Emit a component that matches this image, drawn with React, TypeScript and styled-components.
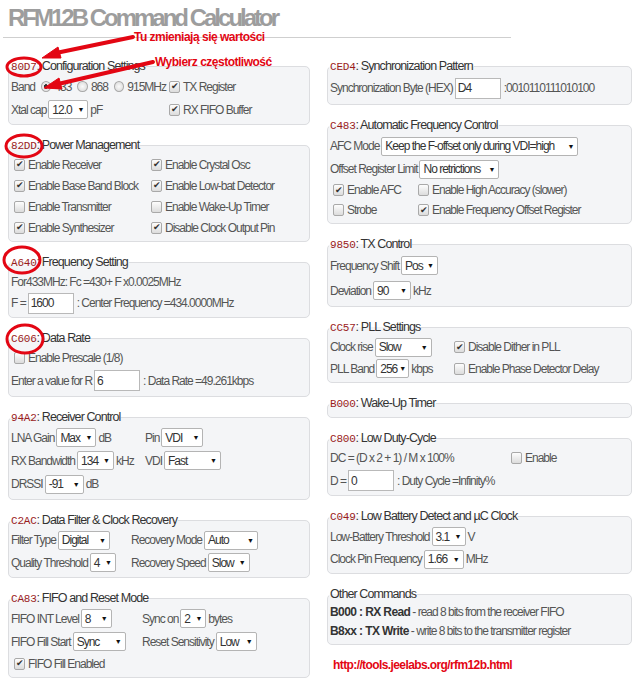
import * as React from "react";
import styled, { createGlobalStyle } from "styled-components";

const TEXT = "#555";
const DARK = "#333";
const CODE_RED = "#9b1c1c";
const MARK_RED = "#e30613";
const FONT = `"Liberation Sans", Arial, sans-serif`;

const GlobalStyle = createGlobalStyle`
  html, body {
    margin: 0;
    padding: 0;
    background: #fff;
  }
  body {
    font-family: ${FONT};
    font-size: 12px;
    letter-spacing: -1px;
    color: ${TEXT};
  }
`;

type CheckProps = { on?: boolean; label: string };

const Check: React.FC<CheckProps> = ({ on, label }) => (
  <CheckLabel>
    <CheckBox>{on ? "✔" : ""}</CheckBox>
    {label}
  </CheckLabel>
);

const Select: React.FC<{ value: string; w: number }> = ({ value, w }) => (
  <SelectBox $w={w}>
    <span>{value}</span>
    <Arrow>▼</Arrow>
  </SelectBox>
);

const Legend: React.FC<{ code?: string; title: string }> = ({ code, title }) => (
  <BoxLegend>
    {code && <Code>{code}</Code>}
    {code ? ": " : ""}
    {title}
  </BoxLegend>
);

const App: React.FC = () => {
  return (
    <Page>
      <GlobalStyle />
      <Title>RFM12B Command Calculator</Title>
      <Rule />
      <Columns>
        <Column>
          <Box>
            <Legend code="80D7" title="Configuration Settings" />
            <Pair $col={155}>
              <Row $h={23}>
                Band
                <Radio $on />433<Radio />868<Radio />915MHz
              </Row>
              <Row $h={23}>
                <Check on label="TX Register" />
              </Row>
              <Row $h={23}>
                Xtal cap <Select value="12.0" w={40} /> pF
              </Row>
              <Row $h={23}>
                <Check on label="RX FIFO Buffer" />
              </Row>
            </Pair>
          </Box>

          <Box>
            <Legend code="82DD" title="Power Management" />
            <Pair $col={137}>
              <Row $h={21}><Check on label="Enable Receiver" /></Row>
              <Row $h={21}><Check on label="Enable Crystal Osc" /></Row>
              <Row $h={21}><Check on label="Enable Base Band Block" /></Row>
              <Row $h={21}><Check on label="Enable Low-bat Detector" /></Row>
              <Row $h={21}><Check label="Enable Transmitter" /></Row>
              <Row $h={21}><Check label="Enable Wake-Up Timer" /></Row>
              <Row $h={21}><Check on label="Enable Synthesizer" /></Row>
              <Row $h={21}><Check on label="Disable Clock Output Pin" /></Row>
            </Pair>
          </Box>

          <Box>
            <Legend code="A640" title="Frequency Setting" />
            <Row $h={21}>For433MHz: Fc =430+ F x0.0025MHz</Row>
            <Row>
              F = <TextBox $w={46}>1600</TextBox>: Center Frequency =434.0000MHz
            </Row>
          </Box>

          <Box>
            <Legend code="C606" title="Data Rate" />
            <Row $h={21}><Check label="Enable Prescale (1/8)" /></Row>
            <Row $h={25}>
              Enter a value for R<TextBox $w={46}>6</TextBox>: Data Rate =49.261kbps
            </Row>
          </Box>

          <Box>
            <Legend code="94A2" title="Receiver Control" />
            <Pair $col={134}>
              <Row $h={23}>LNA Gain <Select value="Max" w={40} /> dB</Row>
              <Row $h={23}>Pin <Select value="VDI" w={42} /></Row>
              <Row $h={23}>RX Bandwidth <Select value="134" w={37} /> kHz</Row>
              <Row $h={23}>VDI <Select value="Fast" w={57} /></Row>
              <Row $h={24}>DRSSI <Select value="-91" w={39} /> dB</Row>
            </Pair>
          </Box>

          <Box>
            <Legend code="C2AC" title="Data Filter &amp; Clock Recovery" />
            <Pair $col={120}>
              <Row $h={22}>Filter Type <Select value="Digital" w={52} /></Row>
              <Row $h={22}>Recovery Mode <Select value="Auto" w={54} /></Row>
              <Row $h={23}>Quality Threshold <Select value="4" w={26} /></Row>
              <Row $h={23}>Recovery Speed <Select value="Slow" w={42} /></Row>
            </Pair>
          </Box>

          <Box>
            <Legend code="CA83" title="FIFO and Reset Mode" />
            <Pair $col={131}>
              <Row $h={23}>FIFO INT Level <Select value="8" w={31} /></Row>
              <Row $h={23}>Sync on <Select value="2" w={26} /> bytes</Row>
              <Row $h={23}>FIFO Fill Start <Select value="Sync" w={53} /></Row>
              <Row $h={23}>Reset Sensitivity <Select value="Low" w={41} /></Row>
            </Pair>
            <Row $h={21}><Check on label="FIFO Fill Enabled" /></Row>
          </Box>
        </Column>

        <Column>
          <Box>
            <Legend code="CED4" title="Synchronization Pattern" />
            <Row $h={26}>
              Synchronization Byte (HEX)<TextBox $w={46}>D4</TextBox>:0010110111010100
            </Row>
          </Box>

          <Box>
            <Legend code="C483" title="Automatic Frequency Control" />
            <Row $h={24}>AFC Mode <Select value="Keep the F-offset only during VDI=high" w={197} /></Row>
            <Row $h={22}>Offset Register Limit <Select value="No retrictions" w={80} /></Row>
            <Pair $col={85}>
              <Row $h={20}><Check on label="Enable AFC" /></Row>
              <Row $h={20}><Check label="Enable High Accuracy (slower)" /></Row>
              <Row $h={20}><Check label="Strobe" /></Row>
              <Row $h={20}><Check on label="Enable Frequency Offset Register" /></Row>
            </Pair>
          </Box>

          <Box>
            <Legend code="9850" title="TX Control" />
            <Row $h={25}>Frequency Shift <Select value="Pos" w={37} /></Row>
            <Row $h={25}>Deviation <Select value="90" w={38} /> kHz</Row>
          </Box>

          <Box>
            <Legend code="CC57" title="PLL Settings" />
            <Pair $col={121}>
              <Row $h={22}>Clock rise <Select value="Slow" w={57} /></Row>
              <Row $h={22}><Check on label="Disable Dither in PLL" /></Row>
              <Row $h={21}>PLL Band <Select value="256" w={33} /> kbps</Row>
              <Row $h={21}><Check label="Enable Phase Detector Delay" /></Row>
            </Pair>
          </Box>

          <Box $empty>
            <Legend code="B000" title="Wake-Up Timer" />
          </Box>

          <Box>
            <Legend code="C800" title="Low Duty-Cycle" />
            <Pair $col={178}>
              <Row $h={22}>DC = (D x 2 + 1) / M x 100%</Row>
              <Row $h={22}><Check label="Enable" /></Row>
            </Pair>
            <Row $h={23}>
              D = <TextBox $w={46}>0</TextBox>: Duty Cycle =Infinity%
            </Row>
          </Box>

          <Box>
            <Legend code="C049" title="Low Battery Detect and µC Clock" />
            <Row $h={23}>Low-Battery Threshold <Select value="3.1" w={34} /> V</Row>
            <Row $h={22}>Clock Pin Frequency <Select value="1.66" w={40} /> MHz</Row>
          </Box>

          <Box>
            <Legend title="Other Commands" />
            <Row $h={19}>
              <Strong>B000 : RX Read</Strong>- read 8 bits from the receiver FIFO
            </Row>
            <Row $h={20}>
              <Strong>B8xx : TX Write</Strong>- write 8 bits to the transmitter register
            </Row>
          </Box>

          <Link>http://tools.jeelabs.org/rfm12b.html</Link>
        </Column>
      </Columns>

      <Note $x={134} $y={30}>Tu zmieniają się wartości</Note>
      <Note $x={155} $y={55}>Wybierz częstotliwość</Note>
      <Marks width="640" height="690" viewBox="0 0 640 690">
        <g fill="none" stroke={MARK_RED} strokeWidth="3">
          <ellipse cx="24" cy="67" rx="17" ry="9" />
          <ellipse cx="24" cy="146" rx="18" ry="11" />
          <ellipse cx="22" cy="260" rx="18" ry="13" />
          <ellipse cx="25" cy="339" rx="18" ry="14" />
        </g>
        <g fill={MARK_RED} stroke={MARK_RED}>
          <path d="M133 37 L56 53" strokeWidth="4" strokeLinecap="round" />
          <polygon points="42,58 58,47 61,58" />
          <path d="M153 62 L58 84" strokeWidth="4" strokeLinecap="round" />
          <polygon points="44,88 59,78 62,89" />
        </g>
      </Marks>
    </Page>
  );
};

export default App;

const Page = styled.div`
  position: relative;
  width: 640px;
  height: 690px;
  padding: 0 8px;
  box-sizing: border-box;
  overflow: hidden;
`;

const Title = styled.h1`
  margin: 0;
  padding-top: 4px;
  font-size: 24px;
  line-height: 28px;
  letter-spacing: -3px;
  font-weight: bold;
  color: #9d9d9d;
`;

const Rule = styled.hr`
  width: 508px;
  margin: 5px 0 0 -5px;
  border: 0;
  border-top: 1px solid #cfcfcf;
`;

const Columns = styled.div`
  display: grid;
  grid-template-columns: 302px 305px;
  column-gap: 17px;
  margin-top: 20px;
`;

const Column = styled.div`
  display: flex;
  flex-direction: column;
  gap: 12px;
`;

const Box = styled.fieldset<{ $empty?: boolean }>`
  margin: 0;
  min-width: 0;
  padding: 0 2px ${(p) => (p.$empty ? 5 : 3)}px 2px;
  border: 1px solid #dcdde0;
  border-radius: 5px;
  background: #f4f5f7;
`;

const BoxLegend = styled.legend`
  padding: 0 1px;
  margin-left: -1px;
  font-size: 12.5px;
  letter-spacing: -0.9px;
  line-height: 16px;
  color: ${DARK};
`;

const Code = styled.span`
  font-family: "Liberation Mono", "DejaVu Sans Mono", monospace;
  font-size: 11px;
  color: ${CODE_RED};
  letter-spacing: -0.2px;
`;

const Pair = styled.div<{ $col: number }>`
  display: grid;
  grid-template-columns: ${(p) => p.$col}px 1fr;
`;

const Row = styled.div<{ $h?: number }>`
  display: flex;
  align-items: center;
  height: ${(p) => p.$h ?? 22}px;
  white-space: nowrap;
  gap: 2px;
`;

const CheckLabel = styled.label`
  display: flex;
  align-items: center;
  padding-left: 3px;
  gap: 3px;
`;

const CheckBox = styled.span`
  display: inline-flex;
  align-items: center;
  justify-content: center;
  width: 9px;
  height: 10px;
  border: 1px solid #a9a9a9;
  border-radius: 2px;
  background: linear-gradient(#fdfdfd, #dcdcdc);
  color: #333;
  font-size: 9px;
  letter-spacing: 0;
  line-height: 1;
`;

const Radio = styled.span<{ $on?: boolean }>`
  display: inline-block;
  width: 9px;
  height: 9px;
  margin: 0 1px 0 4px;
  border: 1px solid #a9a9a9;
  border-radius: 50%;
  background: ${(p) =>
    p.$on
      ? "radial-gradient(circle, #333 0 2px, #e8e8e8 2.5px)"
      : "radial-gradient(circle, #fafafa, #d6d6d6)"};
`;

const SelectBox = styled.span<{ $w: number }>`
  display: inline-flex;
  align-items: center;
  justify-content: space-between;
  box-sizing: border-box;
  width: ${(p) => p.$w}px;
  height: 19px;
  padding: 0 3px 0 3px;
  border: 1px solid #b4b4b4;
  border-radius: 2px;
  background: #fff;
  color: ${DARK};
  overflow: hidden;
`;

const Arrow = styled.span`
  font-size: 7px;
  letter-spacing: 0;
  color: #111;
  margin-left: 2px;
`;

const TextBox = styled.span<{ $w: number }>`
  display: inline-flex;
  align-items: center;
  box-sizing: border-box;
  width: ${(p) => p.$w}px;
  height: 21px;
  padding: 0 2px;
  margin-right: 1px;
  border: 1px solid #b9b9b9;
  background: #fff;
  color: ${DARK};
`;

const Strong = styled.b`
  color: ${DARK};
  letter-spacing: -0.6px;
`;

const Link = styled.div`
  margin: 1px 0 0 6px;
  font-weight: bold;
  font-size: 12px;
  letter-spacing: -0.6px;
  color: ${MARK_RED};
`;

const Note = styled.div<{ $x: number; $y: number }>`
  position: absolute;
  left: ${(p) => p.$x}px;
  top: ${(p) => p.$y}px;
  font-weight: bold;
  font-size: 12px;
  letter-spacing: -0.5px;
  color: ${MARK_RED};
  white-space: nowrap;
`;

const Marks = styled.svg`
  position: absolute;
  left: 0;
  top: 0;
  pointer-events: none;
`;
